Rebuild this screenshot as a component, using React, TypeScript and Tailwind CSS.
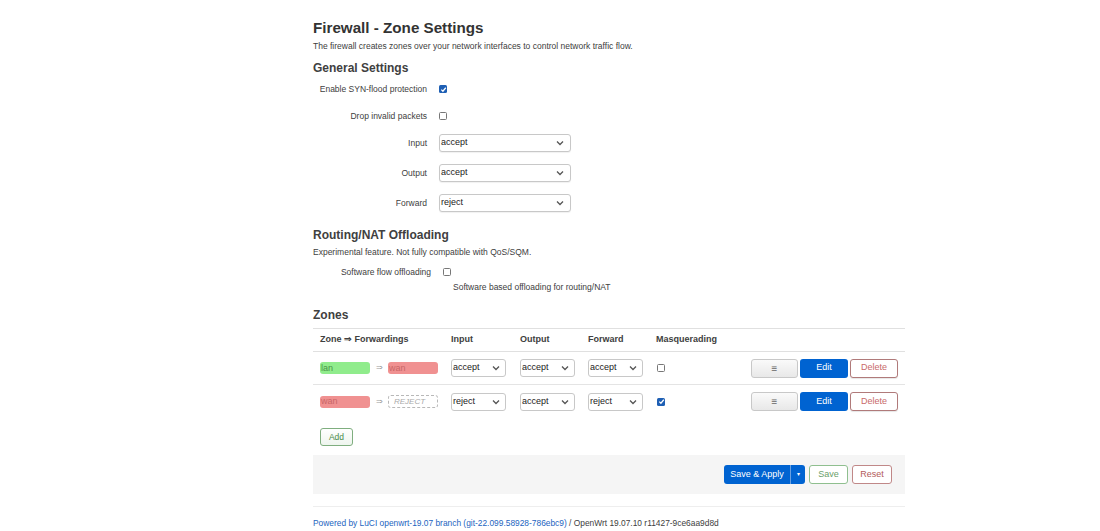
import React from "react";

const Chevron = () => (
  <svg width="8" height="6" viewBox="0 0 8 6" className="shrink-0">
    <polyline points="1,1.5 4,4.5 7,1.5" fill="none" stroke="#555" strokeWidth="1.3" />
  </svg>
);

function Select({ value, w = "w-[132px]" }: { value: string; w?: string }) {
  return (
    <div
      className={`${w} h-[18px] flex items-center justify-between pl-[1px] pr-[6px] border border-[#c8c8c8] rounded-[3px] bg-white text-[9px] text-[#222] shadow-[0_1px_1px_rgba(0,0,0,0.06)]`}
    >
      <span>{value}</span>
      <Chevron />
    </div>
  );
}

function SmallSelect({ value }: { value: string }) {
  return (
    <div className="w-[55px] h-[18px] flex items-center justify-between pl-[1px] pr-[5px] border border-[#c8c8c8] rounded-[3px] bg-white text-[9px] text-[#222]">
      <span>{value}</span>
      <Chevron />
    </div>
  );
}

function Checkbox({ checked }: { checked?: boolean }) {
  return checked ? (
    <div className="w-[8px] h-[8px] rounded-[1.5px] bg-[#1e5fb4] flex items-center justify-center">
      <svg width="7" height="7" viewBox="0 0 8 8">
        <polyline points="1.5,4.2 3.3,6 6.6,2" fill="none" stroke="white" strokeWidth="1.4" />
      </svg>
    </div>
  ) : (
    <div className="w-[8px] h-[8px] rounded-[1.5px] border border-[#777] bg-white" />
  );
}

function Row({ label, h, children }: { label: string; h: string; children: React.ReactNode }) {
  return (
    <div className={`flex items-center ${h}`}>
      <div className="w-[114px] text-right text-[8.5px] text-[#404040]">{label}</div>
      <div className="ml-[12px] flex items-center">{children}</div>
    </div>
  );
}

function Badge({ name, color }: { name: string; color: "green" | "red" }) {
  return (
    <div
      className={`w-[50px] h-[12px] rounded-[3px] flex items-center px-[1px] text-[9px] leading-none ${
        color === "green" ? "bg-[#90ec8c] text-[#4a944a]" : "bg-[#f09191] text-[#c96767]"
      }`}
    >
      {name}
    </div>
  );
}

function ZoneRow({
  zone,
  zoneColor,
  target,
  input,
  output,
  forward,
  masq,
  last,
}: {
  zone: string;
  zoneColor: "green" | "red";
  target: React.ReactNode;
  input: string;
  output: string;
  forward: string;
  masq: boolean;
  last?: boolean;
}) {
  return (
    <div className={`flex items-center h-[33px] ${last ? "" : "border-b border-[#e4e4e4]"}`}>
      <div className="w-[138px] pl-[7px] flex items-center">
        <Badge name={zone} color={zoneColor} />
        <span className="ml-[6px] mr-[5px] text-[8px] text-[#999]">⇒</span>
        {target}
      </div>
      <div className="w-[69px]">
        <SmallSelect value={input} />
      </div>
      <div className="w-[68px]">
        <SmallSelect value={output} />
      </div>
      <div className="w-[68px]">
        <SmallSelect value={forward} />
      </div>
      <div className="w-[95px] pl-[1px]">
        <Checkbox checked={masq} />
      </div>
      <div className="flex items-center gap-[2px]">
        <div className="w-[47px] h-[19px] flex items-center justify-center rounded-[3px] border border-[#c8c8c8] bg-gradient-to-b from-[#fafafa] to-[#e8e8e8] text-[10px] text-[#666]">
          ≡
        </div>
        <div className="w-[48px] h-[19px] flex items-center justify-center rounded-[3px] bg-[#0063d1] text-[9px] text-white">
          Edit
        </div>
        <div className="w-[48px] h-[19px] flex items-center justify-center rounded-[3px] border border-[#b07a7a] bg-white text-[9px] text-[#c86a6a] shadow-[0_1px_1px_rgba(0,0,0,0.1)]">
          Delete
        </div>
      </div>
    </div>
  );
}

export default function App() {
  return (
    <div className="min-h-[531px] bg-white font-['Liberation_Sans',Arial,sans-serif] text-[#404040]">
      <div className="ml-[313px] w-[592px] pt-[18px]">
        <h2 className="text-[15.2px] leading-[19px] font-bold text-[#333]">Firewall - Zone Settings</h2>
        <p className="mt-[3px] text-[8.5px] leading-[12px] text-[#404040]">
          The firewall creates zones over your network interfaces to control network traffic flow.
        </p>

        <h3 className="mt-[8px] text-[12px] leading-[16px] font-bold text-[#404040]">General Settings</h3>

        <div className="mt-[1px]">
          <Row label="Enable SYN-flood protection" h="h-[24px]">
            <Checkbox checked />
          </Row>
          <div className="mt-[3px]">
            <Row label="Drop invalid packets" h="h-[24px]">
              <Checkbox />
            </Row>
          </div>
          <Row label="Input" h="h-[30px]">
            <Select value="accept" />
          </Row>
          <Row label="Output" h="h-[30px]">
            <Select value="accept" />
          </Row>
          <Row label="Forward" h="h-[30px]">
            <Select value="reject" />
          </Row>
        </div>

        <h3 className="mt-[9px] text-[12px] leading-[16px] font-bold text-[#404040]">Routing/NAT Offloading</h3>
        <p className="mt-[3px] text-[8.5px] leading-[12px]">Experimental feature. Not fully compatible with QoS/SQM.</p>
        <div className="mt-[5px] flex items-center h-[18px]">
          <div className="w-[118px] text-right text-[8.5px]">Software flow offloading</div>
          <div className="ml-[12px]">
            <Checkbox />
          </div>
        </div>
        <p className="ml-[140px] text-[8.5px] leading-[12px]">Software based offloading for routing/NAT</p>

        <h3 className="mt-[14px] text-[12px] leading-[16px] font-bold text-[#404040]">Zones</h3>

        <div className="mt-[5px] border-t border-[#e0e0e0]">
          <div className="flex items-center h-[23px] border-b border-[#e0e0e0] text-[9px] font-bold text-[#404040]">
            <div className="w-[138px] pl-[7px]">Zone ⇒ Forwardings</div>
            <div className="w-[69px]">Input</div>
            <div className="w-[68px]">Output</div>
            <div className="w-[68px]">Forward</div>
            <div>Masquerading</div>
          </div>
          <ZoneRow
            zone="lan"
            zoneColor="green"
            target={<Badge name="wan" color="red" />}
            input="accept"
            output="accept"
            forward="accept"
            masq={false}
          />
          <ZoneRow
            zone="wan"
            zoneColor="red"
            target={
              <div className="w-[50px] h-[13px] rounded-[3px] border border-dashed border-[#b8b8b8] flex items-center pl-[5px] text-[8px] italic text-[#aaa]">
                REJECT
              </div>
            }
            input="reject"
            output="accept"
            forward="reject"
            masq
            last
          />
        </div>

        <div className="mt-[10px] ml-[7px] w-[33px] h-[18px] flex items-center justify-center rounded-[3px] border border-[#7fae7f] bg-gradient-to-b from-white to-[#eef5ee] text-[8.5px] text-[#4a8a4a]">
          Add
        </div>

        <div className="mt-[9px] h-[39px] bg-[#f5f5f5] flex items-center justify-end pr-[13px] gap-[4px]">
          <div className="h-[19px] flex rounded-[3px] bg-[#0063d1] text-white text-[9px]">
            <div className="w-[66px] flex items-center justify-center">Save &amp; Apply</div>
            <div className="w-[15px] flex items-center justify-center border-l border-[#6aa0e0] text-[6px]">▾</div>
          </div>
          <div className="w-[39px] h-[19px] flex items-center justify-center rounded-[3px] border border-[#8fbf8f] bg-white text-[9px] text-[#6aa06a]">
            Save
          </div>
          <div className="w-[40px] h-[19px] flex items-center justify-center rounded-[3px] border border-[#c08888] bg-white text-[9px] text-[#b25a5a]">
            Reset
          </div>
        </div>

        <div className="mt-[12px] border-t border-[#eeeeee] pt-[10px] pb-[2px] text-[8.4px] leading-[12px]">
          <span className="text-[#1c64c0]">Powered by LuCI openwrt-19.07 branch (git-22.099.58928-786ebc9)</span>
          <span className="text-[#404040]"> / OpenWrt 19.07.10 r11427-9ce6aa9d8d</span>
        </div>
      </div>
    </div>
  );
}
